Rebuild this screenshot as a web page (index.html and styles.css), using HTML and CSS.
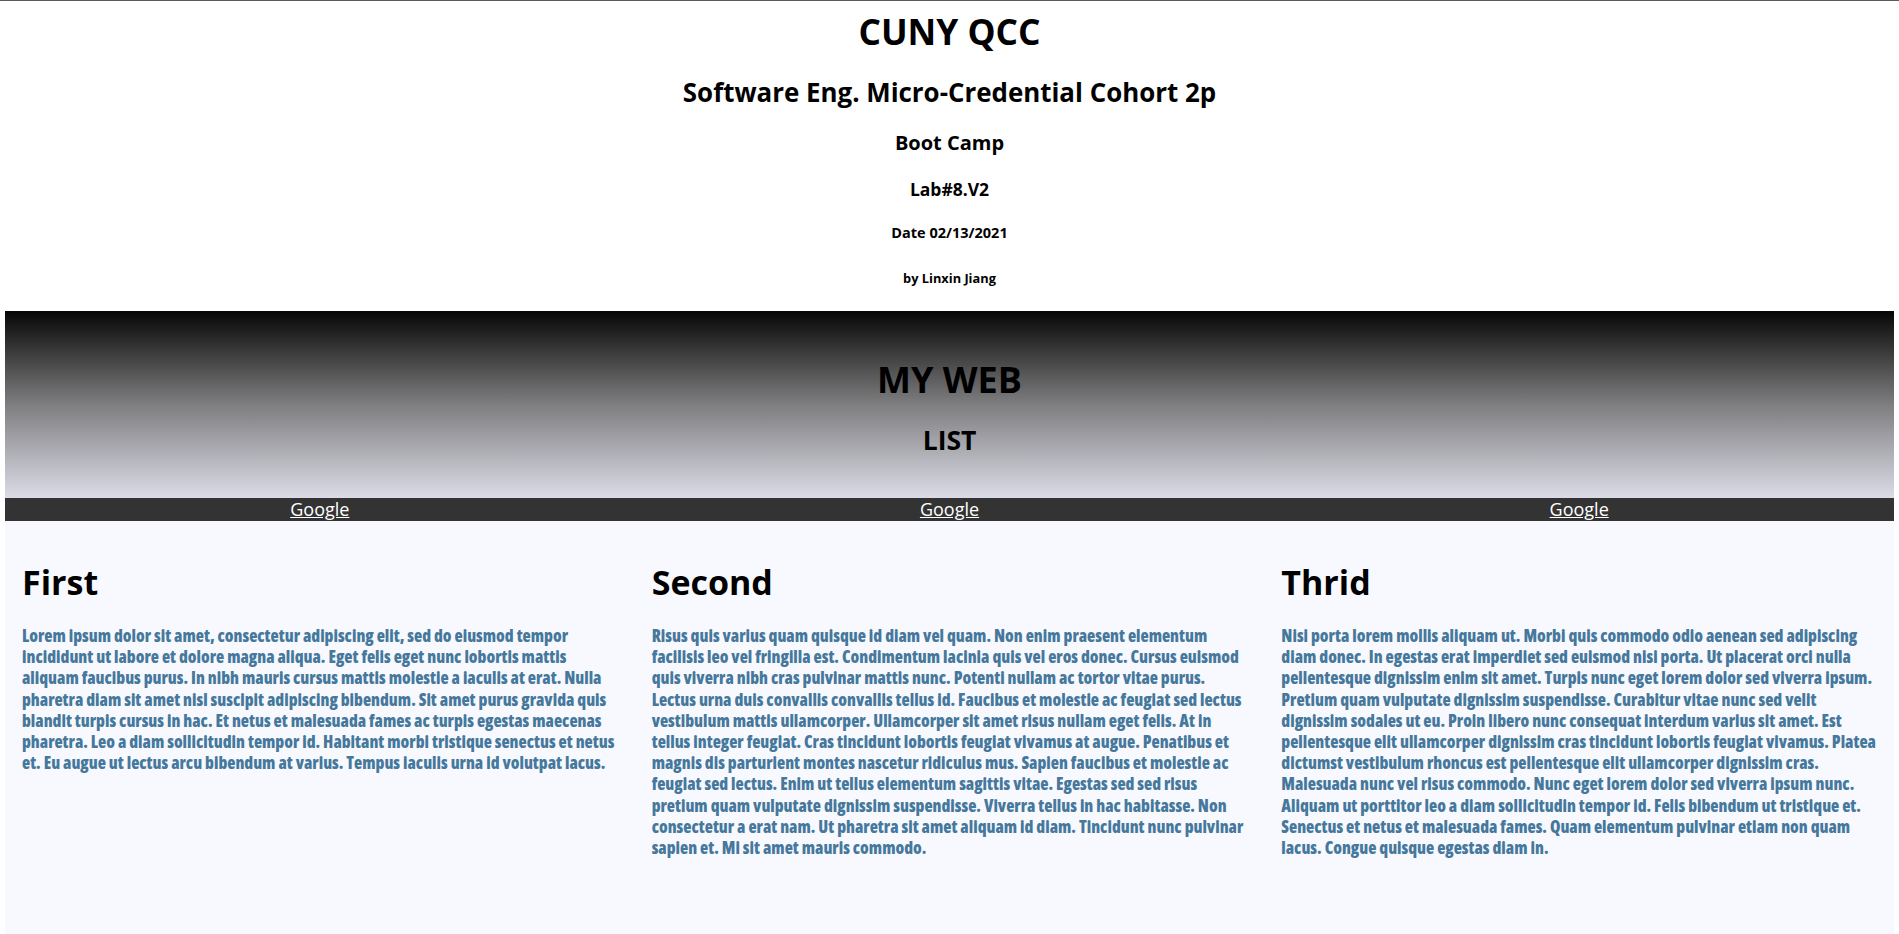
FILE: index.html
```html
<!DOCTYPE html>
<html lang="en">
<head>
<meta charset="utf-8">
<title>Lab#8.V2</title>
<link rel="stylesheet" href="styles.css">
</head>
<body>
<div class="page">
  <header class="intro">
    <h1 class="t1">CUNY QCC</h1>
    <h2 class="t2">Software Eng. Micro-Credential Cohort 2p</h2>
    <h3 class="t3">Boot Camp</h3>
    <h4 class="t4">Lab#8.V2</h4>
    <h5 class="t5">Date 02/13/2021</h5>
    <h6 class="t6">by Linxin Jiang</h6>
  </header>
  <section class="banner">
    <h1 class="banner-title">MY WEB</h1>
    <h2 class="banner-sub">LIST</h2>
  </section>
  <nav class="nav">
    <a href="#" class="nav-link">Google</a>
    <a href="#" class="nav-link">Google</a>
    <a href="#" class="nav-link">Google</a>
  </nav>
  <main class="content">
    <article class="col">
      <h1 class="col-title">First</h1>
      <p class="col-text">Lorem ipsum dolor sit amet, consectetur adipiscing elit, sed do eiusmod tempor incididunt ut labore et dolore magna aliqua. Eget felis eget nunc lobortis mattis aliquam faucibus purus. In nibh mauris cursus mattis molestie a iaculis at erat. Nulla pharetra diam sit amet nisl suscipit adipiscing bibendum. Sit amet purus gravida quis blandit turpis cursus in hac. Et netus et malesuada fames ac turpis egestas maecenas pharetra. Leo a diam sollicitudin tempor id. Habitant morbi tristique senectus et netus et. Eu augue ut lectus arcu bibendum at varius. Tempus iaculis urna id volutpat lacus.</p>
    </article>
    <article class="col">
      <h1 class="col-title">Second</h1>
      <p class="col-text">Risus quis varius quam quisque id diam vel quam. Non enim praesent elementum facilisis leo vel fringilla est. Condimentum lacinia quis vel eros donec. Cursus euismod quis viverra nibh cras pulvinar mattis nunc. Potenti nullam ac tortor vitae purus. Lectus urna duis convallis convallis tellus id. Faucibus et molestie ac feugiat sed lectus vestibulum mattis ullamcorper. Ullamcorper sit amet risus nullam eget felis. At in tellus integer feugiat. Cras tincidunt lobortis feugiat vivamus at augue. Penatibus et magnis dis parturient montes nascetur ridiculus mus. Sapien faucibus et molestie ac feugiat sed lectus. Enim ut tellus elementum sagittis vitae. Egestas sed sed risus pretium quam vulputate dignissim suspendisse. Viverra tellus in hac habitasse. Non consectetur a erat nam. Ut pharetra sit amet aliquam id diam. Tincidunt nunc pulvinar sapien et. Mi sit amet mauris commodo.</p>
    </article>
    <article class="col">
      <h1 class="col-title">Thrid</h1>
      <p class="col-text">Nisi porta lorem mollis aliquam ut. Morbi quis commodo odio aenean sed adipiscing diam donec. In egestas erat imperdiet sed euismod nisi porta. Ut placerat orci nulla pellentesque dignissim enim sit amet. Turpis nunc eget lorem dolor sed viverra ipsum. Pretium quam vulputate dignissim suspendisse. Curabitur vitae nunc sed velit dignissim sodales ut eu. Proin libero nunc consequat interdum varius sit amet. Est pellentesque elit ullamcorper dignissim cras tincidunt lobortis feugiat vivamus. Platea dictumst vestibulum rhoncus est pellentesque elit ullamcorper dignissim cras. Malesuada nunc vel risus commodo. Nunc eget lorem dolor sed viverra ipsum nunc. Aliquam ut porttitor leo a diam sollicitudin tempor id. Felis bibendum ut tristique et. Senectus et netus et malesuada fames. Quam elementum pulvinar etiam non quam lacus. Congue quisque egestas diam in.</p>
    </article>
  </main>
</div>
</body>
</html>
```

FILE: styles.css
```css
* { box-sizing: border-box; }

html, body {
  margin: 0;
  padding: 0;
  background: #ffffff;
}

body {
  font-family: "Open Sans", "Noto Sans", sans-serif;
  color: #000;
}

.page {
  min-height: 100vh;
  display: flex;
  flex-direction: column;
  border-top: 1px solid #5a5a5a;
}

.intro {
  display: flex;
  flex-direction: column;
  align-items: center;
  gap: 20px;
  padding: 7px 0 25px;
  text-align: center;
}

.intro h1, .intro h2, .intro h3, .intro h4, .intro h5, .intro h6 {
  margin: 0;
  font-weight: 700;
}

.t1 { font-size: 35.3px; line-height: 46px; }
.t2 { font-size: 25.9px; line-height: 34px; }
.t3 { font-size: 20px; line-height: 28px; }
.t4 { font-size: 17.5px; line-height: 24px; }
.t5 { font-size: 14.5px; line-height: 20px; }
.t6 { font-size: 12.8px; line-height: 16px; }

.intro .t2 { margin-top: 1px; }
.intro .t5 { margin-top: 2px; }
.intro .t6 { margin-top: 7px; }

.banner {
  margin: 0 5px;
  padding: 46px 0 41px;
  background: linear-gradient(to bottom, #060606 0%, #7e7e80 50%, #dcdce8 100%);
  display: flex;
  flex-direction: column;
  align-items: center;
  gap: 20px;
}

.banner-title {
  margin: 0;
  font-size: 36px;
  line-height: 46px;
  font-weight: 700;
}

.banner-sub {
  margin: 0;
  font-size: 26.5px;
  line-height: 34px;
  font-weight: 700;
}

.nav {
  margin: 0 5px;
  height: 23px;
  background: #333333;
  display: grid;
  grid-template-columns: repeat(3, 1fr);
}

.nav-link {
  text-align: center;
  color: #ffffff;
  font-size: 18px;
  line-height: 23px;
  text-decoration: underline;
}

.content {
  flex: 1;
  margin: 0 5px;
  background: #f8f9fe;
  display: grid;
  grid-template-columns: repeat(3, 1fr);
  align-items: start;
  padding-top: 38px;
}

.col {
  padding: 0 17px;
}

.col-title {
  margin: 0 0 20px;
  font-size: 34px;
  line-height: 46px;
  font-weight: 700;
}

.col-text {
  margin: 0;
  font-family: "Open Sans", "DejaVu Sans Condensed", sans-serif;
  font-stretch: 75%;
  font-weight: 800;
  font-size: 16.9px;
  line-height: 21.2px;
  color: #45789c;
}
```
